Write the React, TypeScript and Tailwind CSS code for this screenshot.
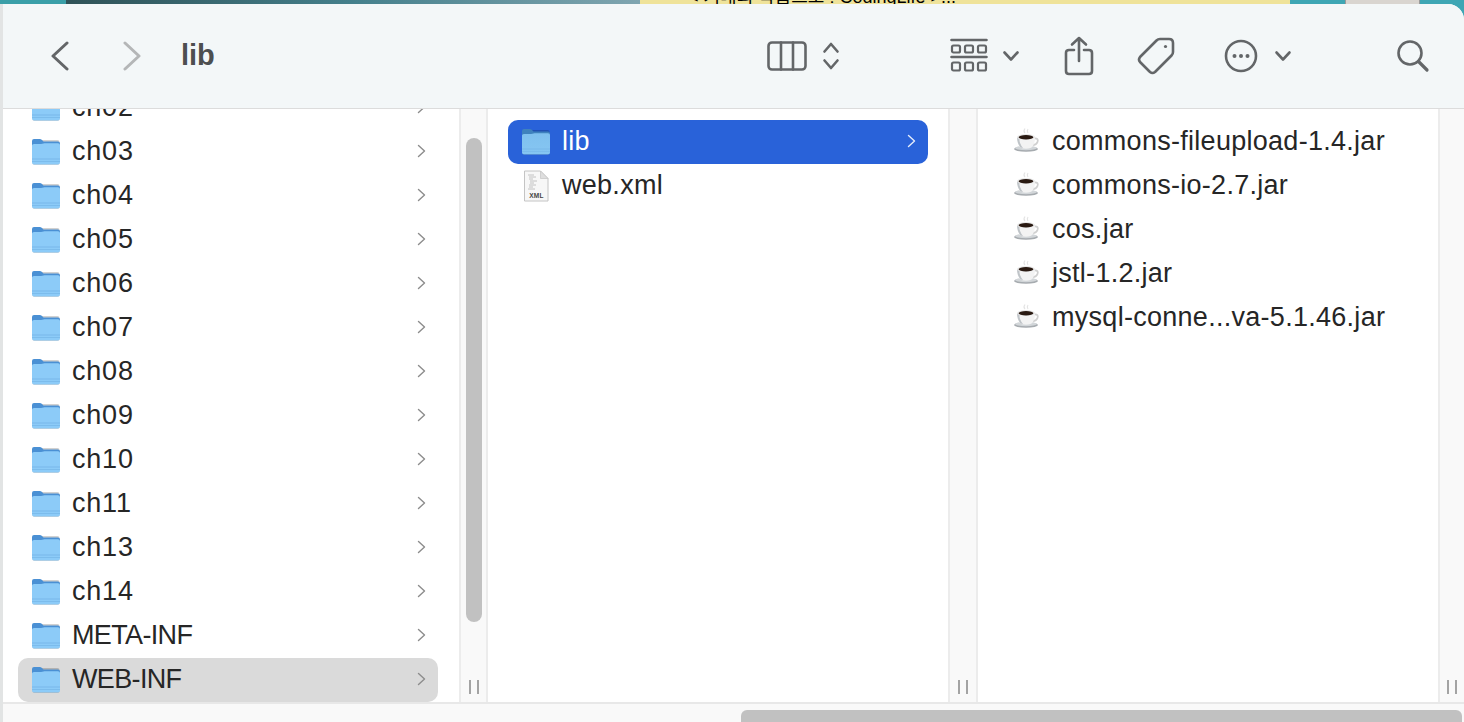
import React from "react";

const Chevron = ({ white }: { white?: boolean }) => (
  <svg width="10" height="14" viewBox="0 0 10 14" fill="none" className="shrink-0 mb-[2px]">
    <path d="M1.5 1.5 L7.5 7 L1.5 12.5" stroke={white ? "#e4ecfb" : "#8c8c8c"} strokeWidth="1.4" strokeLinecap="round" strokeLinejoin="round" />
  </svg>
);

const Folder = ({ id, dark }: { id: string; dark?: boolean }) => (
  <svg width="28" height="28" viewBox="0 0 28 28" className="shrink-0">
    <defs>
      <linearGradient id={id} x1="0" y1="0" x2="0" y2="1">
        <stop offset="0" stopColor={dark ? "#7fc0ee" : "#8ccbf8"} />
        <stop offset="1" stopColor={dark ? "#86c6f2" : "#8ccbf8"} />
      </linearGradient>
    </defs>
    <rect x="0.5" y="2" width="27" height="25" rx="2" fill="#000" opacity="0.18" />
    <path d="M0 3 Q0 1 2 1 L8 1 Q9.5 1 10.5 2.5 L11.5 3.5 L26 3.5 Q28 3.5 28 5.5 L28 12 L0 12 Z" fill={dark ? "#3f82bd" : "#4a90d4"} />
    <path d="M0 7.5 Q0 6 2 6 L9 6 Q10.5 6 11.5 5.6 L12.5 5.2 L26 5.2 Q28 5.2 28 7 L28 24.5 Q28 26.5 26 26.5 L2 26.5 Q0 26.5 0 24.5 Z" fill={`url(#${id})`} />
    <rect x="0" y="20.5" width="28" height="1" fill="#78b8ea" />
    <rect x="0" y="23" width="28" height="1" fill="#7cbcec" />
  </svg>
);

const Xml = () => (
  <svg width="28" height="32" viewBox="0 0 28 32" className="shrink-0">
    <path d="M2.5 1 L18.5 1 L26 8.5 L26 31 L2.5 31 Z" fill="#f7f7f7" stroke="#c4c4c4" strokeWidth="1" />
    <path d="M18.5 1 L18.5 8.5 L26 8.5 Z" fill="#dedede" stroke="#c4c4c4" strokeWidth="0.7" />
    <g stroke="#b5b5b5" strokeWidth="0.8">
      <path d="M6 5 H12 M7 7 H14 M7 9 H11 M8 11 H15 M8 13 H12 M7 15 H14 M7 17 H11 M6 19 H13" />
    </g>
    <text x="14.5" y="28" textAnchor="middle" fontSize="6.5" fontWeight="700" fill="#444" fontFamily="'Liberation Sans', sans-serif">XML</text>
  </svg>
);

const Cup = () => (
  <svg width="28" height="28" viewBox="0 0 28 28" className="shrink-0 mb-[2px]">
    <path d="M13 1.5 Q11 4 13 6 M16 2 Q14.5 4 16 6" stroke="#e4e4e4" strokeWidth="1.2" fill="none" />
    <ellipse cx="14" cy="22" rx="12" ry="2.8" fill="#a6abaf" />
    <ellipse cx="14" cy="21" rx="11" ry="2.2" fill="#d2d6d9" />
    <path d="M22 11.5 Q27 11 25.5 15 Q24.5 18 20.5 18" stroke="#d0d0d0" strokeWidth="1.8" fill="none" />
    <path d="M5 10 L23 10 Q23 19 18.5 21 Q14 22.5 9.5 21 Q5 19 5 10 Z" fill="#f3f3f3" />
    <path d="M5 10 Q5 16 8.5 20.5 L11 21 Q7 16 7.5 12 Z" fill="#bfc4c8" />
    <ellipse cx="14" cy="10" rx="9" ry="3" fill="#e8e8e8" />
    <ellipse cx="14" cy="10.2" rx="7.4" ry="2.2" fill="#2a1a12" />
  </svg>
);

const Row = ({ icon, label, chevron, variant, tight, wide }: { icon: React.ReactNode; label: string; chevron?: boolean; variant?: "blue" | "gray"; tight?: boolean; wide?: boolean }) => (
  <div
    className={
      "flex items-center h-[44px] w-[420px] shrink-0 pl-[14px] pr-[11px] rounded-[10px] text-[27px] " +
      (tight ? "tracking-[-0.65px] " : wide ? "tracking-[0.8px] " : "tracking-[0.28px] ") +
      (variant === "blue" ? "bg-[#2962d9] text-white" : variant === "gray" ? "bg-[#dadada] text-[#262626]" : "text-[#262626]")
    }
  >
    <div className="w-[28px] mr-[12px] flex items-center justify-center shrink-0">{icon}</div>
    <span className="flex-1 whitespace-nowrap leading-none pb-[1px]">{label}</span>
    {chevron && <Chevron white={variant === "blue"} />}
  </div>
);

const Handle = () => (
  <div className="flex justify-center gap-[6px] h-[14px]">
    <div className="w-[2px] bg-[#a3a3a3]" />
    <div className="w-[2px] bg-[#a3a3a3]" />
  </div>
);

const col1 = ["ch02", "ch03", "ch04", "ch05", "ch06", "ch07", "ch08", "ch09", "ch10", "ch11", "ch13", "ch14", "META-INF"];
const jars = ["commons-fileupload-1.4.jar", "commons-io-2.7.jar", "cos.jar", "jstl-1.2.jar", "mysql-conne...va-5.1.46.jar"];

const Ic = ({ w, h, ml, children }: { w: number; h: number; ml: string; children: React.ReactNode }) => (
  <svg width={w} height={h} viewBox={`0 0 ${w} ${h}`} fill="none" stroke="#636668" strokeWidth="2.6" strokeLinecap="round" strokeLinejoin="round" className={"shrink-0 " + ml}>
    {children}
  </svg>
);

export default function App() {
  return (
    <div className="w-[1464px] h-[722px] overflow-hidden flex flex-col bg-[#3ea6b4] font-['Liberation_Sans',sans-serif]">
      {/* desktop strip */}
      <div className="h-[4px] flex shrink-0 overflow-hidden">
        <div className="w-[66px] bg-[#3a9fa8]" />
        <div className="w-[574px] bg-gradient-to-r from-[#2f5257] via-[#44808c] to-[#7fa5b0]" />
        <div className="w-[650px] bg-[#efe39a] relative overflow-hidden">
          <span className="absolute left-[48px] bottom-[-4px] text-[18px] leading-[22px] text-black whitespace-nowrap font-['Liberation_Sans','Noto_Sans_CJK_KR',sans-serif]">
            &lt; 거대의 학습으로 : CodingLife &gt;...
          </span>
        </div>
        <div className="w-[55px] bg-[#3ea6b4]" />
        <div className="w-[75px] bg-[#d9d5d0] border-x border-[#9a9a9a]" />
        <div className="flex-1 bg-[#3ea6b4]" />
      </div>

      {/* window */}
      <div className="flex-1 min-h-0 flex flex-col rounded-tr-[16px] overflow-hidden bg-[#f3f7f8] border-l-[3px] border-[#e2e4e4]">
        {/* toolbar */}
        <div className="h-[105px] shrink-0 flex items-center pl-[47px] pb-[1px] border-b border-[#dcdcdc] bg-[#f3f7f8]">
          <svg width="20" height="30" viewBox="0 0 20 30" fill="none" className="shrink-0">
            <path d="M17 2 L3 15 L17 28" stroke="#636668" strokeWidth="3" strokeLinecap="round" strokeLinejoin="round" />
          </svg>
          <svg width="20" height="30" viewBox="0 0 20 30" fill="none" className="shrink-0 ml-[52px]">
            <path d="M3 2 L17 15 L3 28" stroke="#b4b6b7" strokeWidth="3" strokeLinecap="round" strokeLinejoin="round" />
          </svg>
          <span className="ml-[39px] text-[29px] font-bold text-[#4d4f50] leading-none">lib</span>

          {/* columns */}
          <Ic w={40} h={30} ml="ml-[552px]">
            <rect x="1.5" y="1.5" width="37" height="27" rx="3.5" />
            <path d="M14 1.5 V28.5 M26 1.5 V28.5" />
          </Ic>
          <Ic w={18} h={30} ml="ml-[15px]">
            <path d="M2.5 10.5 L9 3 L15.5 10.5 M2.5 19.5 L9 27 L15.5 19.5" />
          </Ic>
          {/* group */}
          <Ic w={38} h={36} ml="ml-[110px]">
            <path d="M1.5 2 H36.5 M1.5 19 H36.5" />
            <g strokeWidth="2.2">
              <rect x="2" y="7.5" width="8" height="7" rx="1.5" />
              <rect x="15" y="7.5" width="8" height="7" rx="1.5" />
              <rect x="28" y="7.5" width="8" height="7" rx="1.5" />
              <rect x="2" y="24.5" width="8" height="8" rx="1.5" />
              <rect x="15" y="24.5" width="8" height="8" rx="1.5" />
              <rect x="28" y="24.5" width="8" height="8" rx="1.5" />
            </g>
          </Ic>
          <Ic w={18} h={12} ml="ml-[14px]">
            <path d="M2.5 2.5 L9 9.5 L15.5 2.5" />
          </Ic>
          {/* share */}
          <Ic w={30} h={40} ml="ml-[44px]">
            <path d="M15 2 V25 M8 8.5 L15 2 L22 8.5" />
            <path d="M10 14 H5 Q2 14 2 17 V35 Q2 38 5 38 H25 Q28 38 28 35 V17 Q28 14 25 14 H20" />
          </Ic>
          {/* tag */}
          <Ic w={40} h={40} ml="ml-[42px]">
            <path d="M24 3 L33 3 Q37 3 37 7 L37 16 Q37 18 35.5 19.5 L19 36 Q16.5 38 14 36 L4 26 Q2 23.5 4 21 L20.5 4.5 Q22 3 24 3 Z" />
            <circle cx="29.5" cy="10.5" r="1.6" fill="#636668" stroke="none" />
          </Ic>
          {/* more */}
          <Ic w={34} h={34} ml="ml-[48px]">
            <circle cx="17" cy="17" r="15" />
            <g fill="#636668" stroke="none">
              <circle cx="10.5" cy="17" r="2" />
              <circle cx="17" cy="17" r="2" />
              <circle cx="23.5" cy="17" r="2" />
            </g>
          </Ic>
          <Ic w={18} h={12} ml="ml-[16px]">
            <path d="M2.5 2.5 L9 9.5 L15.5 2.5" />
          </Ic>
          {/* search */}
          <Ic w={34} h={34} ml="ml-[104px]">
            <circle cx="14" cy="14" r="11.5" />
            <path d="M22.5 22.5 L31 31" strokeWidth="3.2" />
          </Ic>
        </div>

        {/* browser */}
        <div className="flex-1 min-h-0 flex bg-[#e6e6e6]">
          {/* column 1 */}
          <div className="w-[456px] shrink-0 bg-white flex flex-col justify-end pl-[15px] overflow-hidden">
            {col1.map((n, i) => (
              <Row key={n} icon={<Folder id={"f" + i} />} label={n} chevron tight={n === "META-INF"} wide={n !== "META-INF"} />
            ))}
            <Row icon={<Folder id="fw" />} label="WEB-INF" chevron variant="gray" tight />
          </div>
          <div className="w-[29px] shrink-0 bg-[#f9f9f9] border-x-[2px] border-[#ececec] flex flex-col items-center justify-between pt-[29px] pb-[8px]">
            <div className="w-[16px] h-[484px] rounded-full bg-[#c1c1c1]" />
            <Handle />
          </div>
          {/* column 2 */}
          <div className="w-[460px] shrink-0 bg-white flex flex-col pl-[20px] pt-[11px]">
            <Row icon={<Folder id="fl" dark />} label="lib" chevron variant="blue" />
            <Row icon={<Xml />} label="web.xml" />
          </div>
          <div className="w-[30px] shrink-0 bg-[#f9f9f9] border-x-[2px] border-[#ececec] flex flex-col justify-end pb-[8px]">
            <Handle />
          </div>
          {/* column 3 */}
          <div className="w-[460px] shrink-0 bg-white flex flex-col pl-[20px] pt-[11px]">
            {jars.map((j) => (
              <Row key={j} icon={<Cup />} label={j} />
            ))}
          </div>
          <div className="flex-1 bg-[#f9f9f9] border-l-[2px] border-[#ececec] flex flex-col justify-end pb-[8px]">
            <Handle />
          </div>
        </div>

        {/* footer */}
        <div className="h-[20px] shrink-0 border-t-[2px] border-[#e8e8e8] bg-[#f9f9f9] flex justify-end items-end pr-[2px]">
          <div className="w-[721px] h-[12px] bg-[#c1c1c1] rounded-t-[6px]" />
        </div>
      </div>
    </div>
  );
}
